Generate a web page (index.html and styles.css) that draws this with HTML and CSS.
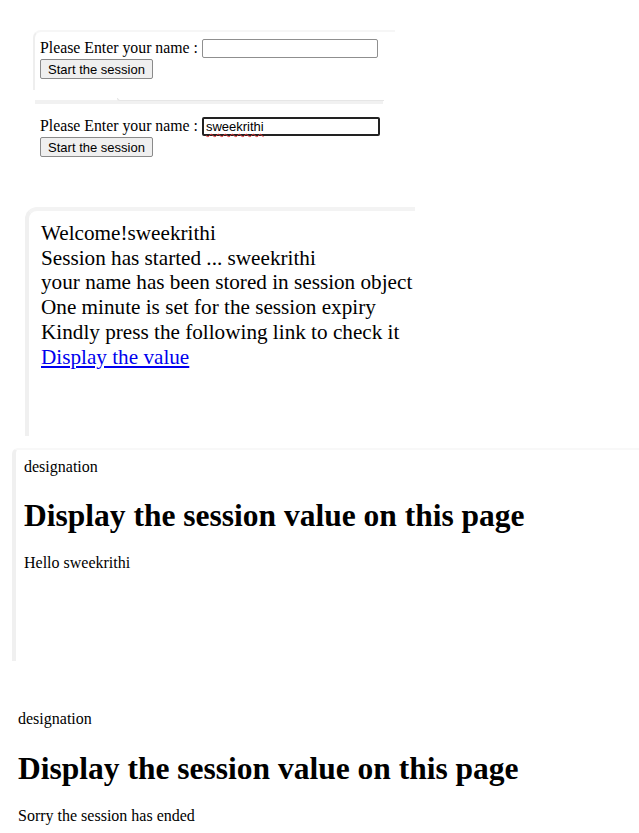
FILE: index.html
```html
<!DOCTYPE html>
<html>
<head>
<meta charset="utf-8">
<link rel="stylesheet" href="styles.css">
</head>
<body>
<div class="page">
  <div class="shot shot-form1">
    <div class="form-row">Please Enter your name : <span class="input"></span></div>
    <button class="btn">Start the session</button>
  </div>

  <div class="strip"><div class="strip-bump"></div></div>

  <div class="shot shot-form2">
    <div class="form-row">Please Enter your name : <span class="input focused"><span class="typed">sweekrithi</span></span></div>
    <button class="btn">Start the session</button>
  </div>

  <div class="shot shot-welcome">
    <div class="welcome-text">
      Welcome!sweekrithi<br>
      Session has started ... sweekrithi<br>
      your name has been stored in session object<br>
      One minute is set for the session expiry<br>
      Kindly press the following link to check it<br>
      <a href="#" class="link">Display the value</a>
    </div>
  </div>

  <div class="shot shot-display">
    <div class="small">designation</div>
    <h1 class="title">Display the session value on this page</h1>
    <div class="small">Hello sweekrithi</div>
  </div>

  <div class="shot shot-ended">
    <div class="small">designation</div>
    <h1 class="title">Display the session value on this page</h1>
    <div class="small">Sorry the session has ended</div>
  </div>
</div>
</body>
</html>
```

FILE: styles.css
```css
html, body {
  margin: 0;
  padding: 0;
  background: #ffffff;
}
body {
  font-family: "Liberation Serif", "Times New Roman", serif;
  color: #000;
}
.page {
  width: 639px;
  height: 833px;
  overflow: hidden;
  display: flex;
  flex-direction: column;
}
.shot-form1 {
  margin: 30px 0 0 33px;
  width: 355px;
  height: 52px;
  border-top: 2px solid #f6f6f6;
  border-left: 2px solid #eeeeee;
  border-top-left-radius: 8px;
  padding: 6px 0 0 5px;
  box-sizing: content-box;
}
.form-row {
  font-size: 15.8px;
  line-height: 20px;
  display: flex;
  align-items: center;
  white-space: pre;
}
.input {
  display: inline-block;
  width: 172px;
  height: 17px;
  border: 1px solid #8f8f8f;
  border-radius: 2px;
  background: #fff;
  font-family: "Liberation Sans", Arial, sans-serif;
  font-size: 13px;
  line-height: 17px;
  padding: 0 0 0 2px;
}
.input.focused {
  border: 2px solid #222;
  height: 15px;
  width: 172px;
  line-height: 15px;
}
.typed {
  text-decoration: underline wavy #e53030;
  text-decoration-thickness: 1px;
  text-underline-offset: 2px;
}
.btn {
  display: block;
  margin: 1px 0 0 0;
  width: 113px;
  height: 20px;
  padding: 0;
  font-family: "Liberation Sans", Arial, sans-serif;
  font-size: 13px;
  color: #000;
  background: #efefef;
  border: 1px solid #8a8a8a;
  border-radius: 2px;
}
.strip {
  margin: 10px 0 0 35px;
  width: 348px;
  height: 4px;
  background: #f1f1f1;
  position: relative;
}
.strip-bump {
  position: absolute;
  left: 82px;
  top: -2px;
  width: 266px;
  height: 2px;
  border-bottom-left-radius: 6px;
  border-left: 1px solid #e6e6e6;
  border-bottom: 1px solid #e6e6e6;
  background: transparent;
}
.shot-form2 {
  margin: 12px 0 0 40px;
}
.shot-welcome {
  margin: 50px 0 0 25px;
  width: 390px;
  height: 229px;
  border-top: 4px solid #f3f3f3;
  border-left: 4px solid #f0f0f0;
  border-top-left-radius: 12px;
  padding: 10px 0 0 12px;
  box-sizing: border-box;
}
.welcome-text {
  font-size: 21.2px;
  line-height: 24.7px;
}
.link {
  color: #0000ee;
  text-decoration: underline;
}
.shot-display {
  margin: 12px 0 0 12px;
  width: 627px;
  height: 213px;
  border-top: 2px solid #f8f8f8;
  border-left: 4px solid #f0f0f0;
  border-top-left-radius: 6px;
  padding: 8px 0 0 8px;
  box-sizing: border-box;
}
.small {
  font-size: 16px;
  line-height: 18px;
}
.title {
  font-size: 31.5px;
  line-height: 36px;
  font-weight: bold;
  margin: 22px 0 20px 0;
}
.shot-ended {
  margin: 49px 0 0 18px;
}
.shot-ended .title {
  margin-top: 23px;
}
```
